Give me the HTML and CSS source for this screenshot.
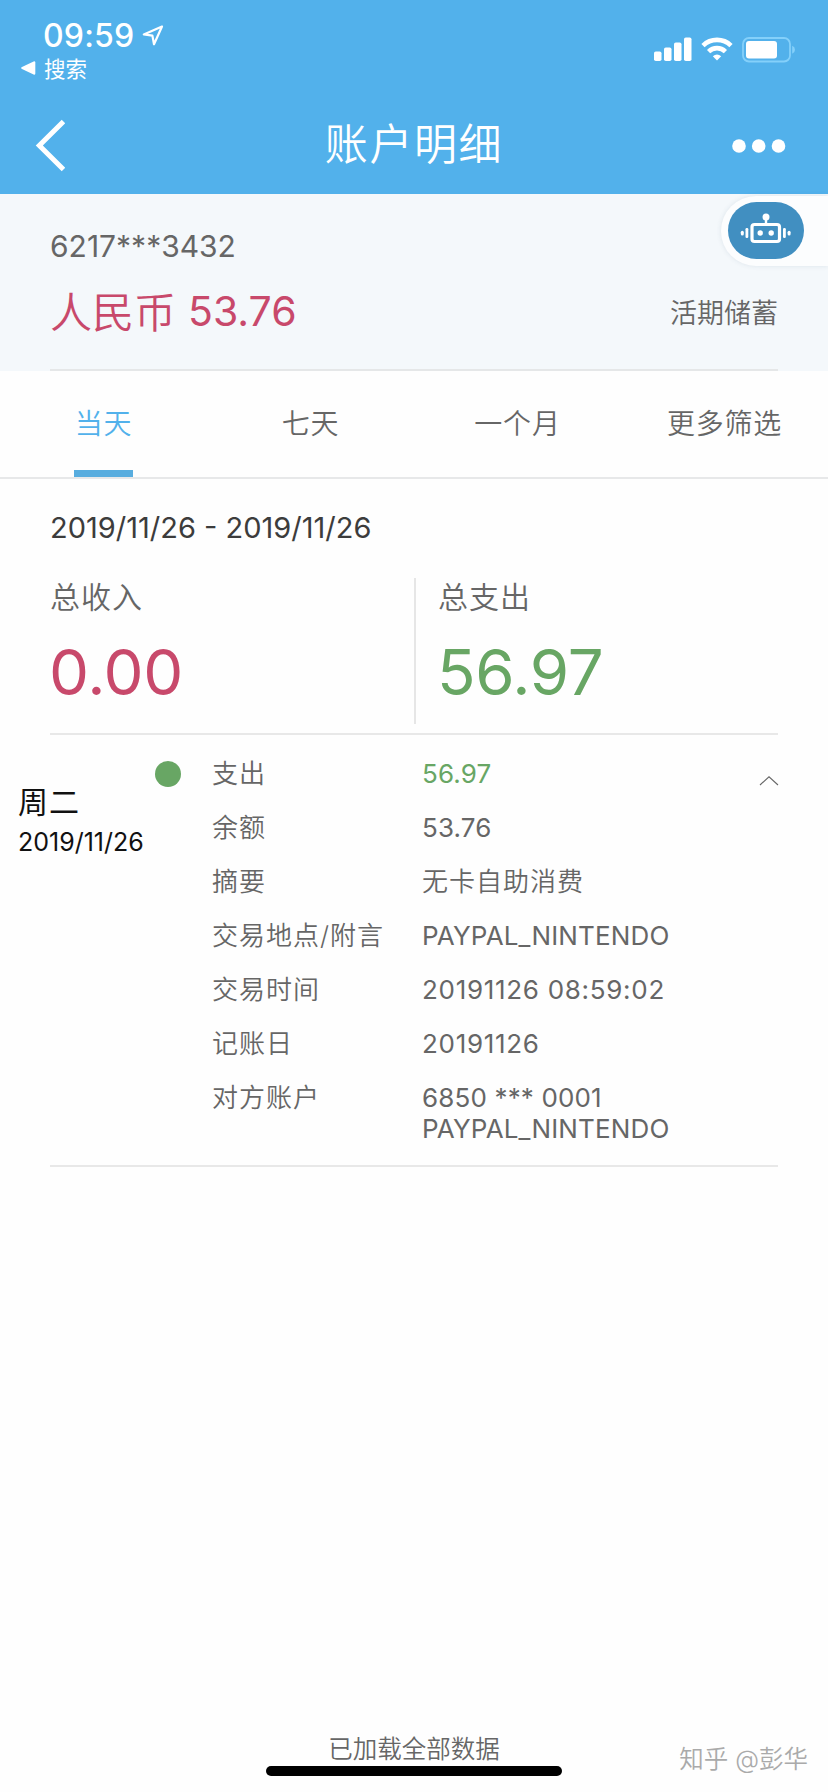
FILE: index.html
```
<!DOCTYPE html>
<html lang="zh-CN">
<head>
    <meta charset="UTF-8">
    <meta name="viewport" content="width=device-width, initial-scale=1.0">
    <title>账户明细</title>
    <link rel="stylesheet" href="styles.css">
</head>
<body>
    <header class="header">
        <div class="status-bar">
            <div class="status-left">
                <div class="clock">
                    <span class="time">09:59</span>
                    <svg width="22" height="21" viewBox="0 0 22 21" fill="none" stroke="#fff" stroke-width="2.2" stroke-linejoin="round">
                        <path d="M20 1.5 L1.8 9.4 L10.4 10.6 L12 19.2 Z"/>
                    </svg>
                </div>
                <div class="back-app">
                    <svg width="15" height="14" viewBox="0 0 15 14" fill="#fff">
                        <path d="M1 5.9 L12.6 0.4 Q14.3 0 14.3 1.6 V12.4 Q14.3 14 12.6 13.6 L1 8.1 Q-0.8 7 1 5.9Z"/>
                    </svg>
                    <span>搜索</span>
                </div>
            </div>
            <div class="status-right">
                <svg width="38" height="24" viewBox="0 0 38 24" fill="#fff">
                    <rect x="0" y="14.5" width="7.5" height="9.5" rx="1.8"/>
                    <rect x="10" y="10.5" width="7.5" height="13.5" rx="1.8"/>
                    <rect x="20" y="5.5" width="7.5" height="18.5" rx="1.8"/>
                    <rect x="30" y="0.5" width="7.5" height="23.5" rx="1.8"/>
                </svg>
                <svg class="wifi" width="32" height="24" viewBox="0 0 32 24" fill="none" stroke="#fff" stroke-width="4.6">
                    <path d="M2 8.6 A20 20 0 0 1 30 8.6"/>
                    <path d="M7.6 14.6 A12 12 0 0 1 24.4 14.6"/>
                    <path d="M16 23.6 L11.8 19.2 Q16 15.8 20.2 19.2 Z" fill="#fff" stroke="none"/>
                </svg>
                <svg class="battery" width="54" height="26" viewBox="0 0 54 26">
                    <rect x="1" y="1" width="47" height="23.5" rx="6" fill="none" stroke="#84d0fa" stroke-width="1.8"/>
                    <rect x="4" y="4" width="31" height="17.5" rx="3" fill="#fff"/>
                    <path d="M50.2 8.8 Q53 10 53 12.8 Q53 15.6 50.2 16.8 Z" fill="#84d0fa"/>
                </svg>
            </div>
        </div>
        <div class="nav-bar">
            <svg width="30" height="54" viewBox="0 0 30 54" fill="none" stroke="#fff" stroke-width="5">
                <path d="M28.5 2.5 L4.3 26.5 L28.5 50.5"/>
            </svg>
            <h1 class="title">账户明细</h1>
            <svg width="54" height="14" viewBox="0 0 54 14" fill="#fff">
                <circle cx="7" cy="7" r="6.8"/>
                <circle cx="26.7" cy="7" r="6.8"/>
                <circle cx="46.5" cy="7" r="6.8"/>
            </svg>
        </div>
    </header>

    <section class="account">
        <div class="card-no">6217***3432</div>
        <div class="balance-row">
            <div class="balance"><span class="currency">人民币</span><span class="amount">53.76</span></div>
            <div class="account-type">活期储蓄</div>
        </div>
        <div class="robot">
            <div class="robot-icon">
                <svg width="52" height="32" viewBox="0 0 52 32" fill="#fff">
                    <circle cx="26" cy="4" r="3.5"/>
                    <rect x="24.8" y="5" width="2.4" height="7"/>
                    <rect x="12" y="11.5" width="27.5" height="17" rx="2.5" fill="none" stroke="#fff" stroke-width="3.2"/>
                    <circle cx="20.2" cy="20" r="2.7"/>
                    <circle cx="31.2" cy="20" r="2.7"/>
                    <rect x="5.5" y="15" width="2.8" height="10" rx="1.2"/>
                    <rect x="43" y="15" width="2.8" height="10" rx="1.2"/>
                    <rect x="0.8" y="17.8" width="3" height="4.6" rx="1.5"/>
                    <rect x="47.6" y="17.8" width="3" height="4.6" rx="1.5"/>
                </svg>
            </div>
        </div>
    </section>

    <nav class="tabs">
        <div class="tab active"><span>当天</span></div>
        <div class="tab"><span>七天</span></div>
        <div class="tab"><span>一个月</span></div>
        <div class="tab"><span>更多筛选</span></div>
    </nav>

    <section class="summary">
        <div class="range">2019/11/26 - 2019/11/26</div>
        <div class="totals">
            <div class="total">
                <div class="total-label">总收入</div>
                <div class="total-value income">0.00</div>
            </div>
            <div class="total">
                <div class="total-label">总支出</div>
                <div class="total-value expense">56.97</div>
            </div>
        </div>
    </section>

    <section class="record">
        <div class="day">
            <div class="weekday">周二</div>
            <div class="date">2019/11/26</div>
        </div>
        <div class="dot"></div>
        <dl class="details">
            <dt>支出</dt><dd class="expense">56.97</dd>
            <dt>余额</dt><dd>53.76</dd>
            <dt>摘要</dt><dd class="cjk">无卡自助消费</dd>
            <dt>交易地点/附言</dt><dd>PAYPAL_NINTENDO</dd>
            <dt>交易时间</dt><dd class="stamp">20191126 08:59:02</dd>
            <dt>记账日</dt><dd class="stamp">20191126</dd>
            <dt>对方账户</dt><dd>6850 *** 0001<br>PAYPAL_NINTENDO</dd>
        </dl>
        <svg class="chevron" width="20" height="10" viewBox="0 0 20 10" fill="none" stroke="#666" stroke-width="1.1">
            <path d="M1 9 L10 0.8 L19 9"/>
        </svg>
    </section>

    <footer class="footer">
        <div class="loaded">已加载全部数据</div>
        <div class="home-bar"></div>
        <div class="watermark">知乎 @彭华</div>
    </footer>
</body>
</html>
```
FILE: styles.css
```
* {
    box-sizing: border-box;
}
body {
    margin: 0;
    height: 1792px;
    display: flex;
    flex-direction: column;
    overflow: hidden;
    background: #fefefe;
    color: #666;
    font-family: Inter, "Noto Sans CJK SC", sans-serif;
    font-weight: 350;
    white-space: nowrap;
}
.header {
    height: 194px;
    background: #52b1eb;
    color: #fff;
}
.status-bar {
    height: 98px;
    display: flex;
    justify-content: space-between;
    padding: 16px 32px 0 21px;
}
.clock {
    display: flex;
    align-items: center;
    gap: 8px;
    height: 38px;
    padding-left: 22px;
}
.time {
    font-size: 32px;
    font-weight: 500;
    letter-spacing: 0.2px;
}
.back-app {
    display: flex;
    align-items: center;
    gap: 8px;
    height: 28px;
    font-size: 21.5px;
    font-weight: 400;
}
.back-app span {
    margin-top: -2px;
}
.status-right {
    display: flex;
    padding-top: 21px;
}
.wifi {
    margin-left: 9px;
}
.battery {
    margin-left: 9px;
}
.nav-bar {
    height: 96px;
    display: flex;
    align-items: center;
    justify-content: space-between;
    padding: 0 42px 0 35px;
}
.title {
    margin: -4px 0 0;
    font-size: 43px;
    font-weight: 350;
    line-height: 60px;
    letter-spacing: 1.6px;
    padding-left: 31px;
}
.account {
    position: relative;
    height: 177px;
    padding: 33px 50px 0;
    background: #f4f8fb;
}
.account::after {
    content: "";
    position: absolute;
    left: 50px;
    right: 50px;
    bottom: 0;
    height: 2px;
    background: #e5e7e8;
}
.card-no {
    height: 38px;
    line-height: 38px;
    font-size: 30px;
    font-weight: 400;
}
.balance-row {
    display: flex;
    justify-content: space-between;
    align-items: center;
    height: 92px;
}
.balance {
    display: flex;
    align-items: center;
    color: #c8496b;
}
.currency {
    margin-top: -3px;
    font-size: 42px;
}
.amount {
    font-size: 41px;
    font-weight: 400;
    margin-left: 12px;
}
.account-type {
    font-size: 27px;
}
.robot {
    position: absolute;
    top: 2px;
    right: 0;
    width: 107px;
    height: 70px;
    padding: 6px 0 0 7px;
    border-radius: 35px 0 0 35px;
    background: #fcfdfe;
    box-shadow: 0 0 5px rgba(60, 90, 120, 0.12);
}
.robot-icon {
    width: 76px;
    height: 57px;
    border-radius: 29px;
    background: #418fc1;
    display: flex;
    align-items: center;
    justify-content: center;
}
.robot-icon svg {
    margin-top: -4px;
}
.tabs {
    display: flex;
    height: 108px;
    border-bottom: 2px solid #e7e8e9;
}
.tab {
    flex: 1;
    display: flex;
    justify-content: center;
    font-size: 28px;
    letter-spacing: 0.8px;
    line-height: 107px;
}
.tab.active {
    color: #52b1eb;
}
.tab.active span {
    width: 59px;
    height: 106px;
    text-align: center;
    border-bottom: 7px solid #58addf;
}
.summary {
    height: 256px;
    margin: 0 50px;
    border-bottom: 2px solid #e8e8e8;
}
.range {
    padding-top: 29px;
    height: 70px;
    line-height: 40px;
    font-size: 29px;
    font-weight: 400;
    color: #3c3c3c;
}
.totals {
    display: flex;
    margin-top: 29px;
}
.total {
    width: 364px;
    height: 146px;
}
.total + .total {
    border-left: 2px solid #e6e6e6;
    padding-left: 22px;
}
.total-label {
    height: 40px;
    line-height: 38px;
    font-size: 30px;
    letter-spacing: 1px;
}
.total-value {
    margin: 14px 0 0 -1px;
    line-height: 80px;
    font-size: 63.5px;
    font-weight: 400;
    letter-spacing: -0.3px;
}
.income {
    color: #c8496b;
}
.expense {
    color: #68a664;
}
.record {
    display: flex;
    height: 432px;
    margin: 0 50px 0 18px;
    position: relative;
}
.record::after {
    content: "";
    position: absolute;
    left: 32px;
    right: 0;
    bottom: 0;
    height: 2px;
    background: #e8e8e8;
}
.day {
    width: 137px;
    padding-top: 45px;
    color: #111;
}
.weekday {
    height: 44px;
    line-height: 44px;
    font-size: 30px;
    font-weight: 400;
    letter-spacing: 1px;
}
.date {
    line-height: 37px;
    font-size: 25px;
    font-weight: 400;
}
.dot {
    width: 26px;
    height: 26px;
    margin: 26px 31px 0 0;
    border-radius: 50%;
    background: #68a664;
}
.details {
    flex: 1;
    display: grid;
    grid-template-columns: 210px 1fr;
    grid-auto-rows: 54px;
    margin: 22px 0 0;
    font-size: 26px;
    line-height: 31px;
}
.details dt {
    letter-spacing: 1px;
    line-height: 34px;
}
.details dd {
    margin: 0;
    padding-top: 1px;
    font-weight: 400;
    letter-spacing: 0.15px;
}
.details .cjk {
    font-weight: 350;
    letter-spacing: 1px;
}
.details .stamp {
    letter-spacing: 0.7px;
}
.chevron {
    position: absolute;
    right: -1px;
    top: 41px;
}
.footer {
    position: relative;
    margin-top: auto;
    height: 64px;
    text-align: center;
}
.loaded {
    line-height: 42px;
    height: 38px;
    font-size: 24.5px;
}
.home-bar {
    width: 296px;
    height: 10px;
    margin: 0 auto;
    border-radius: 5px;
    background: #000;
}
.watermark {
    position: absolute;
    right: 20px;
    top: 12px;
    font-size: 24.5px;
    color: #aaa;
}
```
